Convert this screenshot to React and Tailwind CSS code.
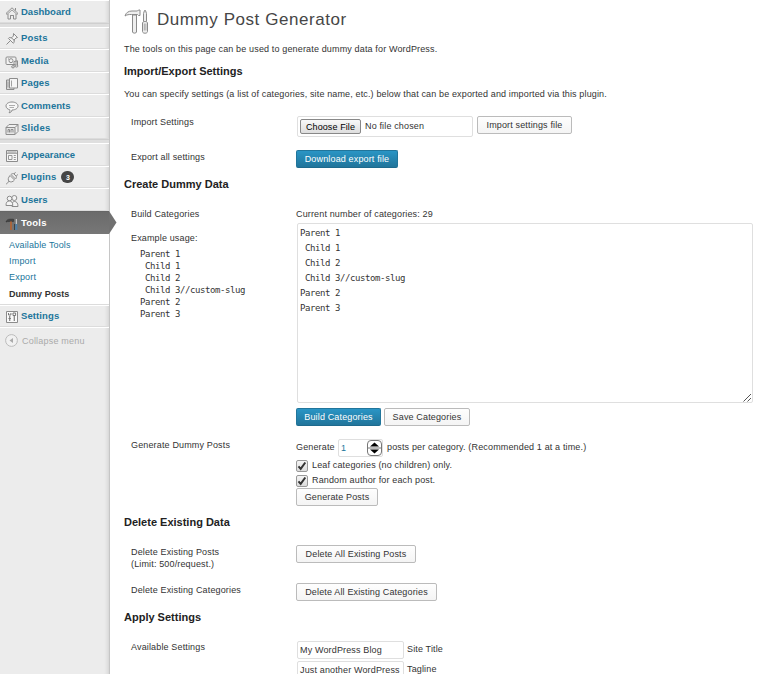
import React from "react";

const S = ({ children, size = 14, vb = "0 0 14 14" }) => (
  <svg width={size} height={size} viewBox={vb} fill="none" stroke="#8c8c8c" strokeWidth="1" className="shrink-0">
    {children}
  </svg>
);

const icons = {
  home: (
    <S>
      <path d="M1 7.5 7 1.8l6 5.7-1 .9L7 3.8 2 8.4z" fill="#fff" />
      <path d="M3 8v5h2.5V9.5h3V13H11V8M10.5 2v2.5M5.5 13V9.5h3V13" />
    </S>
  ),
  pin: (
    <S>
      <path d="m8.5 1.5 4 4-1.5.5-2 2 .2 2.4-1 .8-4.8-4.8.8-.8 2.4.2 1.8-1.8z" fill="#f4f4f4" />
      <path d="M5.5 8.5 1.5 12.5M6 5.5l3.5 3" />
    </S>
  ),
  media: (
    <S>
      <rect x="1" y="2" width="10" height="7.5" rx="1" fill="#f2f2f2" />
      <circle cx="6" cy="5.7" r="2" />
      <path d="M3 4h1M9 11.5V6.5l3.5-.7v5" fill="none" />
      <ellipse cx="8" cy="11.8" rx="1.4" ry="1.1" fill="#eee" />
      <ellipse cx="11.5" cy="11" rx="1.4" ry="1.1" fill="#eee" />
    </S>
  ),
  pages: (
    <S>
      <path d="M4 3H1.5v9.5H9V11" fill="#ddd" />
      <path d="M4.5 1.5h8V11h-8z" fill="#f5f5f5" />
      <path d="M6.5 3.5v6M3 4.5v6" strokeWidth=".8" />
    </S>
  ),
  comments: (
    <S>
      <path d="M7 2c3.4 0 6 1.7 6 4s-2.6 4-6 4c0 1.500-1.400 2.600-3 2.800.8-.8 1-1.800.8-3C2.500 9.200 1 7.800 1 6c0-2.300 2.600-4 6-4z" fill="#f7f7f7" />
      <path d="M4 5.500h6M4.500 7.500h4.500" strokeWidth=".7" />
    </S>
  ),
  slides: (
    <S>
      <path d="m1 5.500 3-3h9v7l-3 3z" fill="#f0f0f0" />
      <path d="M1 5.500h9v7H1zM10 5.500l3-3" fill="#e6e6e6" />
      <path d="M3 10.500v-3h1.500v3M6 10.500v-3h2v3" />
    </S>
  ),
  appearance: (
    <S>
      <path d="M1.500 1.500h11v11h-11z" fill="#f6f6f6" />
      <path d="M1.500 4.300h11M3.500 6.500h3.500v4H3.500zM8.800 6.500h2M8.800 8.500h2M8.800 10.500h2M2.500 3h9" strokeWidth=".9" />
    </S>
  ),
  plugins: (
    <S>
      <path d="M5 4.500 9.500 9c-1.500 2-4 2.500-5.500 1.200S3.300 6.500 5 4.500z" fill="#f2f2f2" />
      <path d="M6 3.500c.8-.8 1.800-1 2.700-.8l2.600 2.600c.2 1 0 2-.8 2.700zM9 3l1.500-1.800M11.200 5l1.700-1.500M4 10.200c-1.500.8-1 2.300-2.800 2.800" fill="#eee" />
    </S>
  ),
  users: (
    <S>
      <circle cx="9.300" cy="4" r="2.500" fill="#f4f4f4" />
      <path d="M7 12.500c0-3.500.5-5 2.500-5s3.500 1.500 3.500 5z" fill="#f4f4f4" />
      <circle cx="4.500" cy="4.500" r="2.300" fill="#f4f4f4" />
      <path d="M1 11.500c0-3 1-4.500 3.300-4.500s3.500 1.500 3.500 4.500z" fill="#f4f4f4" />
    </S>
  ),
  tools: (
    <S>
      <path d="M1 5c.5-2 2-2.800 4-2.800h3.500v2.300H4.500C3 4.500 2 4.500 1 5z" fill="#444" stroke="#333" strokeWidth=".6" />
      <path d="M6 4.500V13" stroke="#a9653c" strokeWidth="2" />
      <path d="M11.300 2v5" stroke="#ddd" strokeWidth="1" />
      <path d="M11.300 7v6" stroke="#4c7fa8" strokeWidth="2" />
      <path d="M9.500 7v6" stroke="#333" strokeWidth=".8" />
    </S>
  ),
  settings: (
    <S>
      <path d="M1.500 1.500h11v11h-11z" fill="#fafafa" />
      <path d="M4.700 6v5M9.300 6v5" stroke="#888" strokeWidth="1.300" />
      <path d="M3.500 3v2h2.400V3M3.500 8.500h2.400M8 3h2.600v2.500H8z" stroke="#777" />
    </S>
  ),
};

function MenuItem({ icon, h, label, w, badge }) {
  return (
    <li className={`flex items-center pl-[5px] border-t border-t-white border-b border-b-[#dcdcdc] ${h}`}>
      <span className="mt-[2px]">{icons[icon]}</span>
      <span className={`ml-[2px] font-bold text-[#21759b] ${w}`}>{label}</span>
      {badge && (
        <span className="ml-[5px] grid h-[12px] w-[13px] place-items-center rounded-full bg-[#464646] text-[7px] font-bold leading-none text-white">
          {badge}
        </span>
      )}
    </li>
  );
}

const Separator = () => <li className="h-[4px] border-t border-[#cfcfcf] bg-[#dfdfdf]" />;

function Sidebar() {
  return (
    <nav className="w-[110px] shrink-0 bg-[#ececec] border-r border-[#c6c6c6] shadow-[inset_-5px_0_4px_-4px_rgba(0,0,0,0.13)]">
      <ul className="text-[9.500px] leading-[12px]">
        <MenuItem icon="home" h="h-[23px]" label="Dashboard" w="tracking-[0.010px]" />
        <Separator />
        <MenuItem icon="pin" h="h-[22px]" label="Posts" w="tracking-[0.150px]" />
        <MenuItem icon="media" h="h-[23px]" label="Media" w="tracking-[0.150px]" />
        <MenuItem icon="pages" h="h-[22px]" label="Pages" w="tracking-[0.150px]" />
        <MenuItem icon="comments" h="h-[23px]" label="Comments" w="tracking-[0.080px]" />
        <MenuItem icon="slides" h="h-[22px]" label="Slides" w="tracking-[0.250px]" />
        <Separator />
        <MenuItem icon="appearance" h="h-[23px]" label="Appearance" w="tracking-[-0.050px]" />
        <MenuItem icon="plugins" h="h-[22px]" label="Plugins" w="tracking-[0.150px]" badge="3" />
        <MenuItem icon="users" h="h-[23px]" label="Users" w="tracking-[0.050px]" />
        <li className="relative flex h-[23px] items-center border-t border-[#666] bg-gradient-to-b from-[#6b6b6b] to-[#777] pl-[5px]">
          <span className="mt-[2px]">{icons.tools}</span>
          <span className="ml-[2px] font-bold tracking-[0.200px] text-white">Tools</span>
          <svg width="8" height="23" viewBox="0 0 8 23" className="absolute -top-px left-[109px]">
            <path d="M0 0 7.500 11.500 0 23z" fill="#717171" />
          </svg>
        </li>
        <li className="border-b border-[#dcdcdc] bg-white">
          <ul className="flex h-[70px] flex-col pl-[9px] pt-[5px] text-[9px] text-[#21759b]">
            <li className="h-[16px] tracking-[0.120px]">Available Tools</li>
            <li className="h-[16px] tracking-[0.200px]">Import</li>
            <li className="h-[17px] tracking-[0.200px]">Export</li>
            <li className="font-bold tracking-[0.020px] text-[#333]">Dummy Posts</li>
          </ul>
        </li>
        <MenuItem icon="settings" h="h-[22px]" label="Settings" w="tracking-[0.100px]" />
        <li className="flex h-[26px] items-center border-t border-white pl-[5px] text-[9px] text-[#aaa]">
          <svg width="13" height="13" viewBox="0 0 13 13">
            <circle cx="6.500" cy="6.500" r="5.900" fill="#f1f1f1" stroke="#bbb" />
            <path d="M8 4v5L4.500 6.500z" fill="#aaa" />
          </svg>
          <span className="ml-[4px] tracking-[0.200px]">Collapse menu</span>
        </li>
      </ul>
    </nav>
  );
}

function Button({ children, w, primary }) {
  const tone = primary
    ? "border-[#21759b] border-b-[#1e6a8d] bg-gradient-to-b from-[#2a95c5] to-[#21759b] text-white"
    : "border-[#bbb] bg-gradient-to-b from-[#fefefe] to-[#f4f4f4] text-[#333]";
  return (
    <button className={`flex h-[18px] shrink-0 items-center justify-center whitespace-nowrap rounded-[2px] border pb-px leading-[12px] ${tone} ${w}`}>
      {children}
    </button>
  );
}

const H3 = ({ children, t }) => <h3 className={`text-[11px] font-bold leading-[14px] text-[#222] ${t}`}>{children}</h3>;

function Row({ label, h, children }) {
  return (
    <div className={`flex ${h}`}>
      <div className="w-[172px] shrink-0 pl-[7px]">{label}</div>
      <div className="min-w-0 flex-1">{children}</div>
    </div>
  );
}

function Check({ children, t }) {
  return (
    <label className="flex h-[15px]">
      <span className="mt-px grid h-[12px] w-[12px] place-items-center rounded-[2px] border border-[#999] bg-gradient-to-b from-[#f4f4f4] to-[#dcdcdc]">
        <svg width="10" height="10" viewBox="0 0 10 10" fill="none" stroke="#333" strokeWidth="2">
          <path d="m1.500 5.300 2.200 2.500L8.300 1.500" />
        </svg>
      </span>
      <span className={`ml-[4px] ${t}`}>{children}</span>
    </label>
  );
}

const field = "rounded-[2px] border border-[#dfdfdf] bg-white";

export default function App() {
  return (
    <div className="flex h-[674px] w-[770px] overflow-hidden bg-white font-['Liberation_Sans',Arial,sans-serif] text-[9px] leading-[12px] text-[#333]">
      <Sidebar />
      <main className="w-[660px] pl-[14px]">
        <div className="flex h-[43px] items-start">
          <svg width="26" height="26" viewBox="0 0 26 26" className="mt-[9px]" fill="#eee" stroke="#8a8a8a" strokeWidth="1">
            <path d="M1 7c1-3.500 3.500-5 7-5h5.500l1-1h1.500v5.500h-1.500l-1-1H7.500C5 5.500 3 5.500 1 7z" />
            <path d="M8.500 6h4v17c0 1.500-4 1.500-4 0z" />
            <path d="M19.500 12.500v-8l1-3h1l1 3v8" />
            <path d="M18.500 14c0-2 5-2 5 0v8.500c0 2.300-5 2.300-5 0z" />
            <path d="M20.300 14.500v7M21.900 14.500v7" strokeWidth=".7" />
          </svg>
          <h2 className="ml-[7px] mt-[9px] text-[17px] leading-[22px] tracking-[0.560px] text-[#464646]">Dummy Post Generator</h2>
        </div>
        <p className="h-[21px] tracking-[0.150px]">The tools on this page can be used to generate dummy data for WordPress.</p>
        <H3 t="h-[24px]">Import/Export Settings</H3>
        <p className="h-[28px] tracking-[0.140px]">
          You can specify settings (a list of categories, site name, etc.) below that can be exported and imported via this plugin.
        </p>

        <Row h="h-[35px]" label={<span className="tracking-[0.150px]">Import Settings</span>}>
          <div className="flex">
            <div className={`ml-px flex h-[21px] w-[176px] items-center pl-[2px] ${field}`}>
              <button className="flex h-[15px] w-[61px] items-center justify-center rounded-[2px] border border-[#888] bg-gradient-to-b from-[#f8f8f8] to-[#dedede] tracking-[0.100px] text-black">
                Choose File
              </button>
              <span className="ml-[4px] mb-px tracking-[0.150px]">No file chosen</span>
            </div>
            <div className="ml-[4px]">
              <Button w="w-[95px] tracking-[0.150px]">Import settings file</Button>
            </div>
          </div>
        </Row>
        <Row h="h-[26px]" label={<span className="tracking-[0.150px]">Export all settings</span>}>
          <div className="-mt-px">
            <Button primary w="w-[102px] tracking-[0.150px]">Download export file</Button>
          </div>
        </Row>
        <H3 t="h-[31px]">Create Dummy Data</H3>

        <Row
          h="h-[231px]"
          label={
            <>
              <div className="h-[24px] tracking-[0.150px]">Build Categories</div>
              <div className="h-[16px] tracking-[0.150px]">Example usage:</div>
              <pre className="pl-[9px] font-['DejaVu_Sans_Mono',monospace] text-[9px] leading-[12px] tracking-[-0.418px]">
                {"Parent 1\n Child 1\n Child 2\n Child 3//custom-slug\nParent 2\nParent 3"}
              </pre>
            </>
          }
        >
          <div className="h-[15px] tracking-[0.150px]">Current number of categories: 29</div>
          <div className={`relative ml-px h-[180px] w-[456px] pl-[2px] pt-[2px] ${field}`}>
            <pre className="font-['DejaVu_Sans_Mono',monospace] text-[9px] leading-[15px] tracking-[-0.418px]">
              {"Parent 1\n Child 1\n Child 2\n Child 3//custom-slug\nParent 2\nParent 3"}
            </pre>
            <svg width="9" height="9" viewBox="0 0 9 9" className="absolute bottom-0 right-0" stroke="#555" strokeWidth="1">
              <path d="M.5 8.500 8 1M4.500 8.500 8 5" />
            </svg>
          </div>
          <div className="mt-[5px] flex gap-[3px]">
            <Button primary w="w-[85px] tracking-[0.150px]">Build Categories</Button>
            <Button w="w-[86px] tracking-[0.150px]">Save Categories</Button>
          </div>
        </Row>

        <Row h="h-[76px]" label={<span className="tracking-[0.150px]">Generate Dummy Posts</span>}>
          <div className="flex h-[20px] items-start">
            <span className="mt-[2px] w-[42px] tracking-[0.150px]">Generate</span>
            <div className={`flex h-[18px] w-[45px] items-center justify-between pl-[2px] text-[#21759b] ${field}`}>
              <span>1</span>
              <svg width="15" height="16" viewBox="0 0 15 16">
                <rect x=".5" y=".5" width="14" height="15" rx="3.500" fill="#fff" stroke="#777" />
                <path d="M.5 8h14" stroke="#777" />
                <path d="M3 6.500h9L7.500 2.500zM3 9.500h9l-4.500 4z" fill="#000" />
              </svg>
            </div>
            <span className="ml-[4px] mt-[2px] tracking-[0.150px]">posts per category. (Recommended 1 at a time.)</span>
          </div>
          <Check t="tracking-[0.150px]">Leaf categories (no children) only.</Check>
          <Check t="tracking-[0.150px]">Random author for each post.</Check>
          <div className="-mt-px">
            <Button w="w-[82px] tracking-[0.150px]">Generate Posts</Button>
          </div>
        </Row>
        <H3 t="h-[30px]">Delete Existing Data</H3>
        <Row
          h="h-[38px]"
          label={
            <div className="mt-px tracking-[0.150px]">
              Delete Existing Posts
              <br />
              (Limit: 500/request.)
            </div>
          }
        >
          <Button w="w-[120px] tracking-[0.150px]">Delete All Existing Posts</Button>
        </Row>
        <Row h="h-[27px]" label={<div className="mt-px tracking-[0.150px]">Delete Existing Categories</div>}>
          <Button w="w-[141px] tracking-[0.150px]">Delete All Existing Categories</Button>
        </Row>
        <H3 t="h-[31px]">Apply Settings</H3>
        <Row h="h-[40px]" label={<span className="tracking-[0.150px]">Available Settings</span>}>
          <div className="ml-px flex h-[20px]">
            <div className={`flex h-[18px] w-[107px] items-center overflow-hidden whitespace-nowrap pl-[2px] tracking-[0.150px] ${field}`}>
              My WordPress Blog
            </div>
            <span className="ml-[3px] mt-[2px] tracking-[0.150px]">Site Title</span>
          </div>
          <div className="ml-px flex h-[20px]">
            <div className={`flex h-[18px] w-[107px] items-center overflow-hidden whitespace-nowrap pl-[2px] tracking-[0.150px] ${field}`}>
              Just another WordPress
            </div>
            <span className="ml-[3px] mt-[2px] tracking-[0.150px]">Tagline</span>
          </div>
        </Row>
      </main>
    </div>
  );
}
